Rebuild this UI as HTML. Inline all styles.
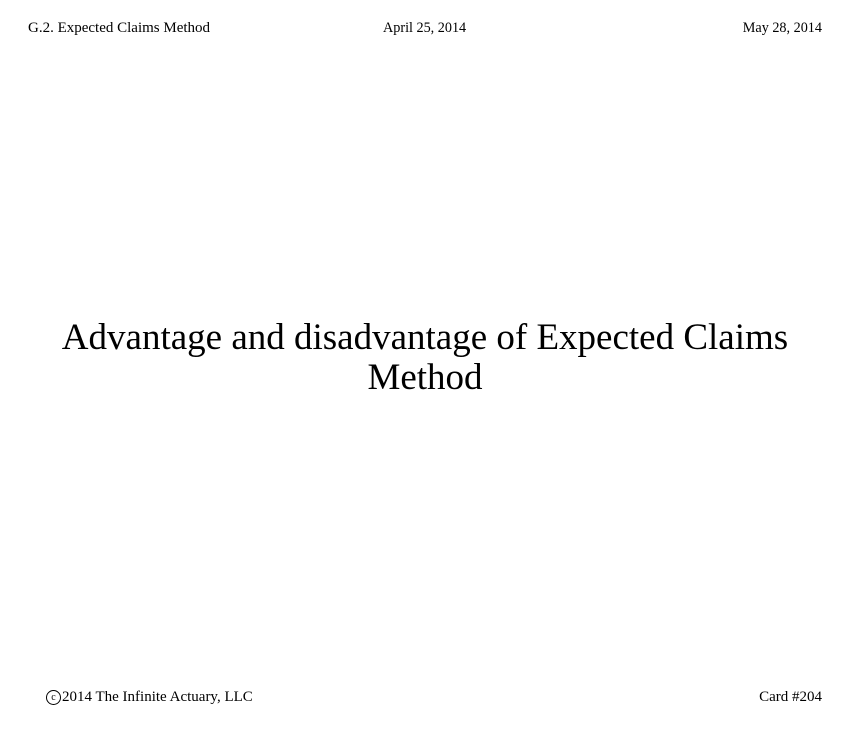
<!DOCTYPE html>
<html><head><style>
body{margin:0;width:850px;height:734px;background:#fff;font-family:"Liberation Serif",serif;color:#000;position:relative;overflow:hidden}
.s{position:absolute;font-size:15px;line-height:16px;white-space:nowrap}
.t{position:absolute;left:0;width:850px;top:318px;text-align:center;font-size:37px;line-height:40px}
.c{display:inline-block;width:13px;height:13px;border:1px solid #000;border-radius:50%;font-size:10px;line-height:13px;text-align:center;vertical-align:1px;margin-right:1px}
</style></head><body>
<div class="s" style="left:28px;top:20px">G.2. Expected Claims Method</div>
<div class="s" style="left:383px;top:20px;font-size:14.2px">April 25, 2014</div>
<div class="s" style="right:28px;top:20px;font-size:14.2px">May 28, 2014</div>
<div class="t">Advantage and disadvantage of Expected Claims<br>Method</div>
<div class="s" style="left:46px;top:689px"><span class="c">c</span>2014 The Infinite Actuary, LLC</div>
<div class="s" style="right:28px;top:689px">Card #204</div>
</body></html>
